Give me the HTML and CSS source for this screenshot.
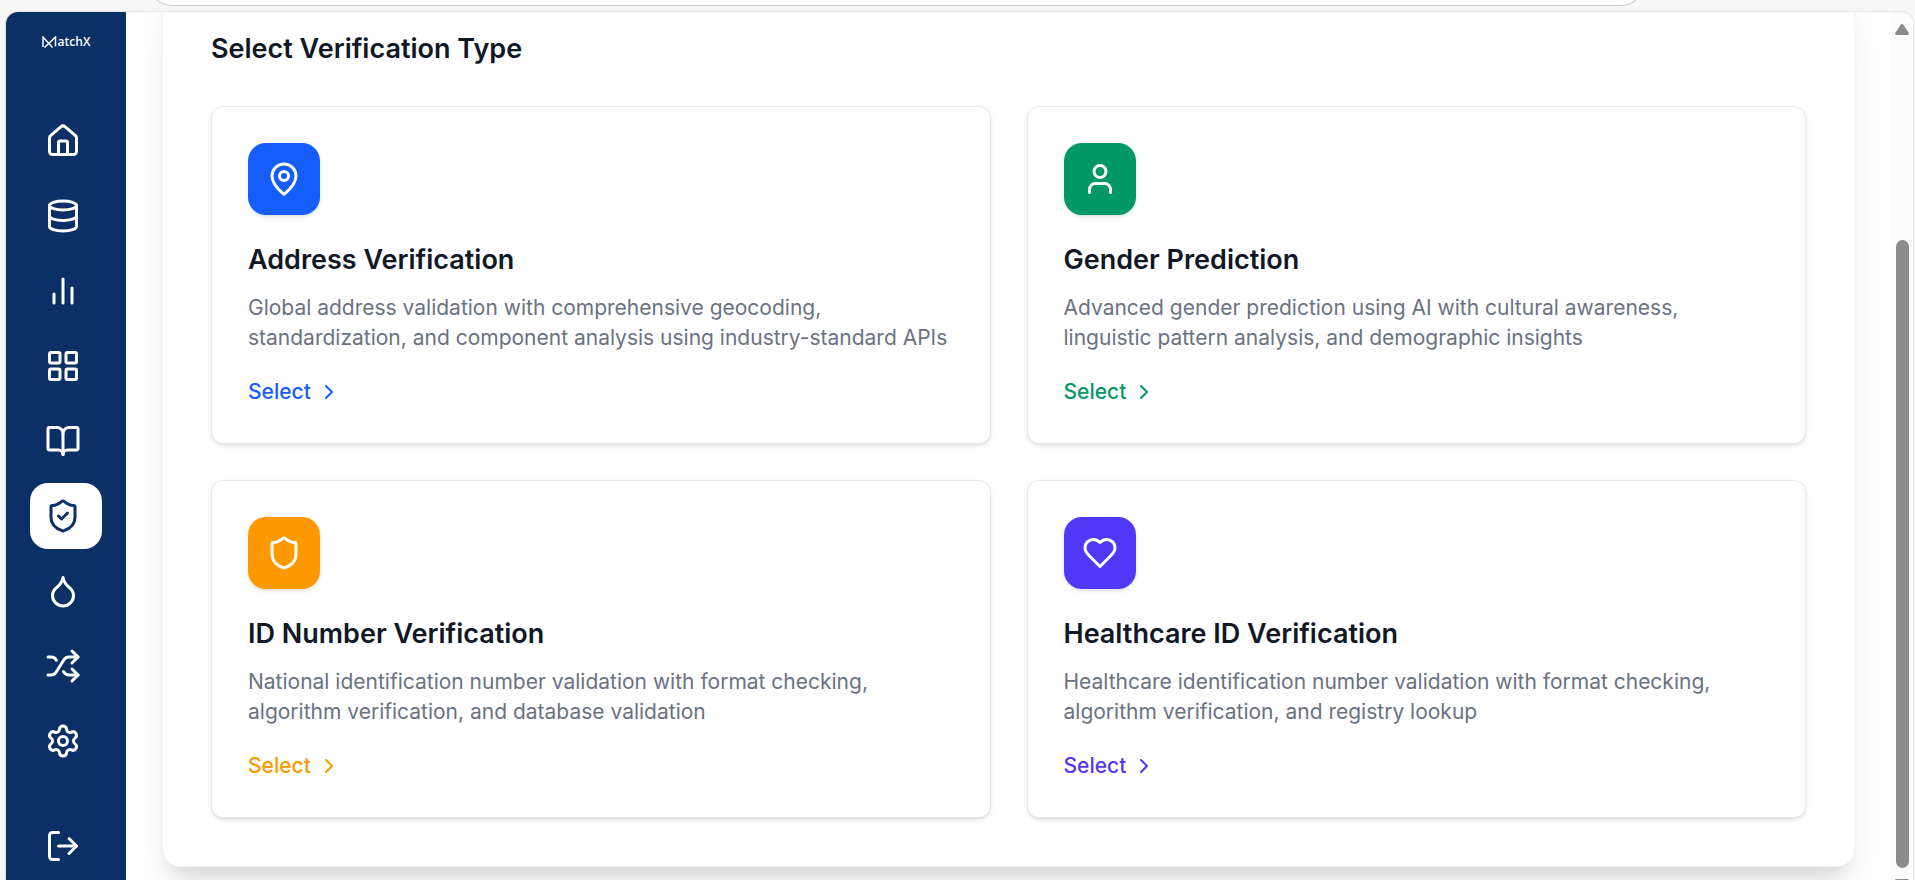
FILE: index.html
```html
<!DOCTYPE html>
<html lang="en">
<head>
  <meta charset="UTF-8" />
  <meta name="viewport" content="width=device-width, initial-scale=1.0" />
  <title>MatchX - Verification</title>
  <link rel="stylesheet" href="styles.css">
</head>
<body>
  <!-- Browser bar -->
  <div class="browser-bar">
    <div class="address-bar"></div>
  </div>

  <div class="window">
    <!-- Sidebar -->
    <aside class="sidebar">
      <a class="logo" href="#">
        <svg viewBox="0 0 16 13" aria-hidden="true"><path d="M1 11V1l9.500 10.500M2.500 11.500 13.500 1v9.500"/></svg>
        <span>atchX</span>
      </a>

      <nav class="nav">
        <a href="#" aria-label="Home"><svg class="icon" viewBox="0 0 24 24"><path d="M15 21v-8a1 1 0 0 0-1-1h-4a1 1 0 0 0-1 1v8"/><path d="M3 10a2 2 0 0 1 .709-1.528l7-5.999a2 2 0 0 1 2.582 0l7 5.999A2 2 0 0 1 21 10v9a2 2 0 0 1-2 2H5a2 2 0 0 1-2-2z"/></svg></a>
        <a href="#" aria-label="Data"><svg class="icon" viewBox="0 0 24 24"><ellipse cx="12" cy="5" rx="9" ry="3"/><path d="M3 5v14a9 3 0 0 0 18 0V5"/><path d="M3 12a9 3 0 0 0 18 0"/></svg></a>
        <a href="#" aria-label="Reports"><svg class="icon" viewBox="0 0 24 24"><path d="M18 20V10M12 20V4M6 20v-6"/></svg></a>
        <a href="#" aria-label="Dashboard"><svg class="icon" viewBox="0 0 24 24"><rect x="3" y="3" width="7" height="7" rx="1"/><rect x="14" y="3" width="7" height="7" rx="1"/><rect x="14" y="14" width="7" height="7" rx="1"/><rect x="3" y="14" width="7" height="7" rx="1"/></svg></a>
        <a href="#" aria-label="Catalog"><svg class="icon" viewBox="0 0 24 24"><path d="M12 7v14"/><path d="M3 18a1 1 0 0 1-1-1V4a1 1 0 0 1 1-1h5a4 4 0 0 1 4 4 4 4 0 0 1 4-4h5a1 1 0 0 1 1 1v13a1 1 0 0 1-1 1h-6a3 3 0 0 0-3 3 3 3 0 0 0-3-3z"/></svg></a>
        <a href="#" class="active" aria-label="Verification"><svg class="icon" viewBox="0 0 24 24"><path d="M20 13c0 5-3.500 7.500-7.660 8.950a1 1 0 0 1-.67-.01C7.500 20.500 4 18 4 13V6a1 1 0 0 1 1-1c2 0 4.500-1.200 6.240-2.720a1.170 1.170 0 0 1 1.520 0C14.510 3.810 17 5 19 5a1 1 0 0 1 1 1z"/><path d="m9 12 2 2 4-4"/></svg></a>
        <a href="#" aria-label="Cleansing"><svg class="icon" viewBox="0 0 24 24"><path d="M12 22a7 7 0 0 0 7-7c0-2-1-3.900-3-5.500s-3.500-4-4-6.500c-.5 2.500-2 4.900-4 6.500C6 11.100 5 13 5 15a7 7 0 0 0 7 7z"/></svg></a>
        <a href="#" aria-label="Matching"><svg class="icon" viewBox="0 0 24 24"><path d="m18 14 4 4-4 4"/><path d="m18 2 4 4-4 4"/><path d="M2 18h1.973a4 4 0 0 0 3.300-1.700l5.454-8.600a4 4 0 0 1 3.300-1.700H22"/><path d="M2 6h1.972a4 4 0 0 1 3.600 2.200"/><path d="M22 18h-6.041a4 4 0 0 1-3.300-1.800l-.359-.45"/></svg></a>
        <a href="#" aria-label="Settings"><svg class="icon" viewBox="0 0 24 24"><path d="M9.671 4.136a2.340 2.340 0 0 1 4.659 0 2.340 2.340 0 0 0 3.319 1.915 2.340 2.340 0 0 1 2.330 4.033 2.340 2.340 0 0 0 0 3.831 2.340 2.340 0 0 1-2.330 4.033 2.340 2.340 0 0 0-3.319 1.915 2.340 2.340 0 0 1-4.659 0 2.340 2.340 0 0 0-3.320-1.915 2.340 2.340 0 0 1-2.330-4.033 2.340 2.340 0 0 0 0-3.831A2.340 2.340 0 0 1 6.350 6.051a2.340 2.340 0 0 0 3.319-1.915"/><circle cx="12" cy="12" r="3"/></svg></a>
        <a href="#" class="logout" aria-label="Log out"><svg class="icon" viewBox="0 0 24 24"><path d="m16 17 5-5-5-5"/><path d="M21 12H9"/><path d="M9 21H5a2 2 0 0 1-2-2V5a2 2 0 0 1 2-2h4"/></svg></a>
      </nav>
    </aside>

    <!-- Content, scrolled down to the type picker -->
    <main class="content">
      <section class="panel">
        <h2>Select Verification Type</h2>

        <div class="cards">
          <article class="card address">
            <div class="card-icon"><svg class="icon" viewBox="0 0 24 24"><path d="M20 10c0 4.993-5.539 10.193-7.399 11.799a1 1 0 0 1-1.202 0C9.539 20.193 4 14.993 4 10a8 8 0 0 1 16 0"/><circle cx="12" cy="10" r="3"/></svg></div>
            <h3>Address Verification</h3>
            <p>Global address validation with comprehensive geocoding, standardization, and component analysis using industry-standard APIs</p>
            <button class="select-button">Select <svg viewBox="0 0 24 24"><path d="m9 18 6-6-6-6"/></svg></button>
          </article>

          <article class="card gender">
            <div class="card-icon"><svg class="icon" viewBox="0 0 24 24"><path d="M19 21v-2a4 4 0 0 0-4-4H9a4 4 0 0 0-4 4v2"/><circle cx="12" cy="7" r="4"/></svg></div>
            <h3>Gender Prediction</h3>
            <p>Advanced gender prediction using AI with cultural awareness, linguistic pattern analysis, and demographic insights</p>
            <button class="select-button">Select <svg viewBox="0 0 24 24"><path d="m9 18 6-6-6-6"/></svg></button>
          </article>

          <article class="card id-number">
            <div class="card-icon"><svg class="icon" viewBox="0 0 24 24"><path d="M20 13c0 5-3.500 7.500-7.660 8.950a1 1 0 0 1-.67-.01C7.500 20.500 4 18 4 13V6a1 1 0 0 1 1-1c2 0 4.500-1.200 6.240-2.720a1.170 1.170 0 0 1 1.520 0C14.510 3.810 17 5 19 5a1 1 0 0 1 1 1z"/></svg></div>
            <h3>ID Number Verification</h3>
            <p>National identification number validation with format checking, algorithm verification, and database validation</p>
            <button class="select-button">Select <svg viewBox="0 0 24 24"><path d="m9 18 6-6-6-6"/></svg></button>
          </article>

          <article class="card healthcare">
            <div class="card-icon"><svg class="icon" viewBox="0 0 24 24"><path d="M19 14c1.490-1.460 3-3.210 3-5.500A5.500 5.500 0 0 0 16.500 3c-1.760 0-3 .5-4.500 2-1.500-1.500-2.740-2-4.500-2A5.500 5.500 0 0 0 2 8.500c0 2.300 1.500 4.050 3 5.500l7 7Z"/></svg></div>
            <h3>Healthcare ID Verification</h3>
            <p>Healthcare identification number validation with format checking, algorithm verification, and registry lookup</p>
            <button class="select-button">Select <svg viewBox="0 0 24 24"><path d="m9 18 6-6-6-6"/></svg></button>
          </article>
        </div>
      </section>
    </main>

    <!-- Scrollbar -->
    <div class="scrollbar">
      <svg viewBox="0 0 14 11" aria-hidden="true"><path d="M5.500 1Q7 -.8 8.500 1L13.600 8.500Q14.500 11 12.500 11H1.500Q-.5 11 .4 8.500Z"/></svg>
      <div class="thumb"></div>
      <svg viewBox="0 0 14 11" aria-hidden="true"><path d="M5.500 10Q7 11.800 8.500 10L13.600 2.500Q14.500 0 12.500 0H1.500Q-.5 0 .4 2.500Z"/></svg>
    </div>
  </div>
</body>
</html>
```

FILE: styles.css
```css
*, *::before, *::after {
  box-sizing: border-box;
}

html, body {
  margin: 0;
  padding: 0;
  height: 100vh;
  overflow: hidden;
}

body {
  display: flex;
  flex-direction: column;
  background: #f7f7f7;
  color: #101828;
  font-family: Inter, "Liberation Sans", sans-serif;
  font-size: 21px;
  line-height: 30px;
}

/* Browser bar */
.browser-bar {
  display: flex;
  align-items: flex-end;
  flex: none;
  height: 12px;
  padding: 0 270px 6px 148px;
  overflow: hidden;
}

.address-bar {
  flex: 1;
  height: 48px;
  background: #ffffff;
  border: 1px solid #c8c8c8;
  border-radius: 24px;
}

.window {
  display: flex;
  flex: 1;
  min-height: 0;
  margin: 0 2px 0 6px;
  background: #ffffff;
  border-radius: 12px 12px 0 0;
  box-shadow: 0 0 2px rgba(0, 0, 0, 0.25);
  overflow: hidden;
}

/* Shared line icon style */
.icon {
  display: block;
  width: 36px;
  height: 36px;
  fill: none;
  stroke: currentColor;
  stroke-width: 2;
  stroke-linecap: round;
  stroke-linejoin: round;
}

/* Sidebar */
.sidebar {
  flex: none;
  width: 120px;
  background: #0a3066;
  color: #ffffff;
}

.logo {
  display: flex;
  align-items: center;
  justify-content: center;
  height: 60px;
  color: #ffffff;
  font-family: "Open Sans", sans-serif;
  font-size: 12px;
  font-weight: 600;
  line-height: 16px;
  text-decoration: none;
}

.logo svg {
  width: 16px;
  height: 13px;
  fill: none;
  stroke: currentColor;
  stroke-width: 1.5;
}

.nav {
  display: flex;
  flex-direction: column;
  gap: 9px;
  padding: 36px 24px 0;
}

.nav a {
  padding: 15px;
  border-radius: 18px;
  color: #ffffff;
}

.nav a.active {
  background: #ffffff;
  color: #0a3066;
}

.nav a.logout {
  margin-top: 30px;
}

/* Content */
.content {
  flex: 1;
  min-width: 0;
  padding: 0 36px;
  overflow: hidden;
}

.panel {
  margin-top: -33px;
  padding: 48px;
  background: #ffffff;
  border: 1px solid #f3f4f6;
  border-radius: 18px;
  box-shadow: 0 30px 38px -8px rgba(0, 0, 0, 0.1), 0 12px 15px -9px rgba(0, 0, 0, 0.1);
}

h2, h3 {
  margin: 0;
  font-size: 27px;
  font-weight: 600;
  line-height: 42px;
}

.cards {
  display: grid;
  grid-template-columns: 1fr 1fr;
  gap: 36px;
  margin-top: 36px;
}

.card {
  padding: 36px;
  background: #ffffff;
  border: 1px solid #e5e7eb;
  border-radius: 12px;
  box-shadow: 0 2px 4px rgba(0, 0, 0, 0.1), 0 2px 3px -2px rgba(0, 0, 0, 0.1);
}

.card-icon {
  display: flex;
  align-items: center;
  justify-content: center;
  width: 72px;
  height: 72px;
  margin-bottom: 24px;
  border-radius: 18px;
  color: #ffffff;
  box-shadow: 0 2px 4px rgba(0, 0, 0, 0.1), 0 2px 3px -2px rgba(0, 0, 0, 0.1);
}

.card p {
  margin: 12px 0 24px;
  color: #6a7282;
}

.select-button {
  display: flex;
  align-items: center;
  gap: 6px;
  padding: 0;
  background: none;
  border: none;
  font: inherit;
  font-weight: 500;
  cursor: pointer;
}

.select-button svg {
  width: 24px;
  height: 24px;
  fill: none;
  stroke: currentColor;
  stroke-width: 2;
  stroke-linecap: round;
  stroke-linejoin: round;
}

/* Card colors */
.address .card-icon { background: #155dfc; }
.address .select-button { color: #155dfc; }

.gender .card-icon { background: #009966; }
.gender .select-button { color: #009966; }

.id-number .card-icon { background: #fe9a00; }
.id-number .select-button { color: #fe9a00; }

.healthcare .card-icon { background: #4f39f6; }
.healthcare .select-button { color: #4f39f6; }

/* Scrollbar */
.scrollbar {
  display: flex;
  flex-direction: column;
  align-items: center;
  flex: none;
  width: 22px;
  padding-top: 12px;
  background: #fcfcfc;
}

.scrollbar svg {
  flex: none;
  width: 14px;
  height: 11px;
  margin-bottom: -10px;
  fill: #8b8b8b;
}

.thumb {
  flex: 1;
  width: 13px;
  margin: 215px 0 11px;
  background: #8b8b8b;
  border-radius: 7px;
}
```
